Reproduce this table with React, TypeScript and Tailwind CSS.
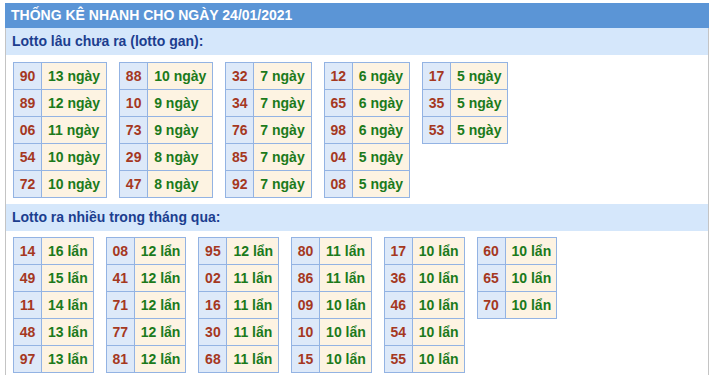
import React from "react";

type Row = [string, string];

const gan: Row[][] = [
  [["90", "13"], ["89", "12"], ["06", "11"], ["54", "10"], ["72", "10"]],
  [["88", "10"], ["10", "9"], ["73", "9"], ["29", "8"], ["47", "8"]],
  [["32", "7"], ["34", "7"], ["76", "7"], ["85", "7"], ["92", "7"]],
  [["12", "6"], ["65", "6"], ["98", "6"], ["04", "5"], ["08", "5"]],
  [["17", "5"], ["35", "5"], ["53", "5"]],
];

const nhieu: Row[][] = [
  [["14", "16"], ["49", "15"], ["11", "14"], ["48", "13"], ["97", "13"]],
  [["08", "12"], ["41", "12"], ["71", "12"], ["77", "12"], ["81", "12"]],
  [["95", "12"], ["02", "11"], ["16", "11"], ["30", "11"], ["68", "11"]],
  [["80", "11"], ["86", "11"], ["09", "10"], ["10", "10"], ["15", "10"]],
  [["17", "10"], ["36", "10"], ["46", "10"], ["54", "10"], ["55", "10"]],
  [["60", "10"], ["65", "10"], ["70", "10"]],
];

function Table({ rows, unit, tight }: { rows: Row[]; unit: string; tight?: boolean }) {
  return (
    <div className="grid grid-cols-[28px_auto] border-l border-t border-[#93b3e3]">
      {rows.map(([n, c], i) => (
        <React.Fragment key={i}>
          <div className="h-[27px] w-[28px] border-r border-b border-[#93b3e3] bg-[#dde9f9] text-center leading-[26px] text-[#a5381f]">
            {n}
          </div>
          <div
            className={
              tight
                ? "h-[27px] border-r border-b border-[#93b3e3] bg-[#fdf3e2] pl-[6px] pr-[5px] leading-[26px] text-[#1b7a1b] whitespace-nowrap"
                : "h-[27px] border-r border-b border-[#93b3e3] bg-[#fdf3e2] px-[6px] leading-[26px] text-[#1b7a1b] whitespace-nowrap"
            }
          >
            {c} {unit}
          </div>
        </React.Fragment>
      ))}
    </div>
  );
}

export default function App() {
  return (
    <div
      className="w-[710px] h-[375px] overflow-hidden bg-white pt-[3px] pl-[5px]"
      style={{ fontFamily: '"Liberation Sans", Arial, sans-serif' }}
    >
      <div className="w-[704px] h-[372px] border-x border-[#c4c4c4]">
        <div className="h-[25px] bg-[#5b95d6] -mx-px pl-[6px] text-[14px] font-bold leading-[25px] text-white">
          THỐNG KÊ NHANH CHO NGÀY 24/01/2021
        </div>
        <div className="h-[27px] bg-[#d5e7fb] pl-[6px] text-[14px] font-bold leading-[27px] text-[#1c3e8f]">
          Lotto lâu chưa ra (lotto gan):
        </div>
        <div className="flex items-start gap-[12px] pl-[7px] pt-[7px] pb-[6px] text-[14px] font-bold">
          {gan.map((t, i) => (
            <Table key={i} rows={t} unit="ngày" />
          ))}
        </div>
        <div className="h-[27px] bg-[#d5e7fb] pl-[6px] text-[14px] font-bold leading-[27px] text-[#1c3e8f]">
          Lotto ra nhiều trong tháng qua:
        </div>
        <div className="flex items-start gap-[12px] pl-[7px] pt-[6px] text-[14px] font-bold">
          {nhieu.map((t, i) => (
            <Table key={i} rows={t} unit="lẩn" tight />
          ))}
        </div>
      </div>
    </div>
  );
}
